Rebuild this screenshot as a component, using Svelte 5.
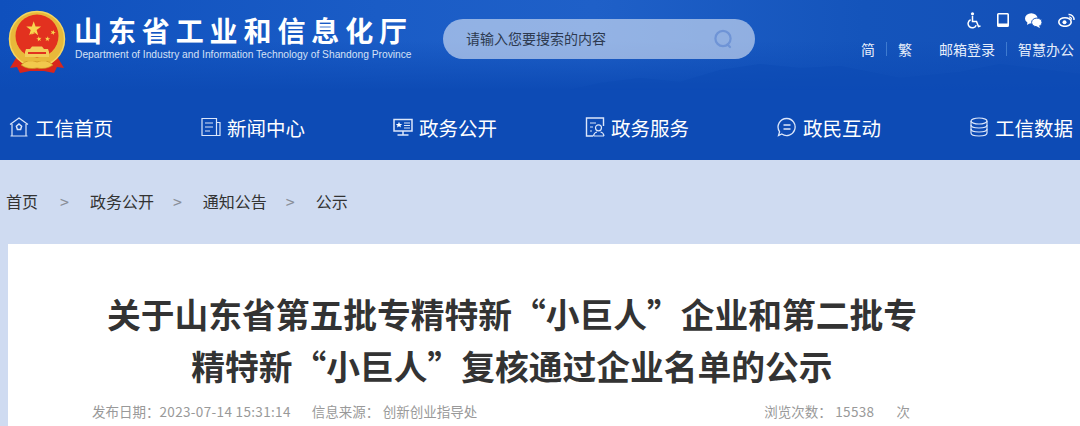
<script>
  // Nav items, the icon is picked by key in the markup below
  const navItems = [
    { key: 'home', label: '工信首页' },
    { key: 'news', label: '新闻中心' },
    { key: 'open', label: '政务公开' },
    { key: 'service', label: '政务服务' },
    { key: 'chat', label: '政民互动' },
    { key: 'data', label: '工信数据' }
  ];

  const crumbs = ['首页', '政务公开', '通知公告', '公示'];

  const starPoints = '0,-5 1.2,-1.6 4.8,-1.6 1.9,0.6 2.9,4 0,2 -2.9,4 -1.9,0.6 -4.8,-1.6 -1.2,-1.6';
  const smallStars = [
    { x: 25, y: 25, r: -20 },
    { x: 45.5, y: 25, r: 20 },
    { x: 31.5, y: 31.5, r: -10 },
    { x: 40, y: 31.5, r: 10 }
  ];
</script>

<div class="page">

  <!-- Header -->
  <header class="top">
    <svg class="hills" width="1080" height="40" viewBox="0 0 1080 40">
      <path d="M570 40 L600 33 L640 28 L680 32 L720 20 L760 14 L800 18 L840 16 L900 28 L960 22 L1000 14 L1080 24 V40 Z" fill="#0d4bb5" opacity=".55" />
    </svg>

    <div class="brand">
      <svg class="emblem" width="58" height="68" viewBox="0 0 58 68">
        <path d="M8 50 L2 60 L9 59 L12 65 L22 63 L36 63 L46 65 L49 59 L56 60 L50 50 Z" fill="#d8261c" />
        <circle cx="29" cy="31" r="27.5" fill="#e8b93a" />
        <circle cx="29" cy="31" r="27.5" fill="none" stroke="#f4d660" stroke-width="1.5" />
        <circle cx="29" cy="28" r="21.5" fill="#e2311f" />
        <polygon points={starPoints} fill="#f8d64e" transform="translate(35 21) scale(1.55) translate(-6 0)" />
        {#each smallStars as star}
          <polygon points={starPoints} fill="#f8d64e" transform="translate({star.x - 0.5} {star.y - 0.5}) rotate({star.r}) scale(0.55)" />
        {/each}
        <path d="M18 41 L22 41 L24 38.5 L34 38.5 L36 41 L40 41 L41 44 L41 49 L17 49 L17 44 Z" fill="#f3cd5a" />
        <path d="M20 44 H38 V46 H20 Z" fill="#e2311f" />
        <path d="M13 57 Q20 50 29 54 Q38 50 45 57 Q38 62 29 60 Q20 62 13 57 Z" fill="#f2c94c" stroke="#c98a1e" stroke-width="0.7" />
        <path d="M16 52 Q22 47 29 50 Q36 47 42 52 Q36 54 29 53 Q22 54 16 52 Z" fill="#e8b93a" />
      </svg>
      <div class="brandText">
        <div class="brandName">山东省工业和信息化厅</div>
        <div class="brandEn">Department of Industry and Information Technology of Shandong Province</div>
      </div>
    </div>

    <div class="search">
      <span>请输入您要搜索的内容</span>
      <svg width="20" height="20" viewBox="0 0 20 20" fill="none" stroke="#6f94d6" stroke-width="2.2">
        <circle cx="10" cy="9.5" r="7.6" />
        <path d="M14.5 15.5 L17 18" stroke-linecap="round" />
      </svg>
    </div>

    <div class="tools">
      <div class="toolIcons">
        <svg width="14" height="17" viewBox="0 0 14 17" fill="none" stroke="#fff" stroke-width="1.5">
          <circle cx="5.5" cy="1.8" r="1.6" fill="#fff" stroke="none" />
          <path d="M5.5 4 V9.5 H9.5 L11.5 14.5 L13.5 14" />
          <path d="M3.6 7.8 A4.2 4.2 0 1 0 9.2 13.2" />
        </svg>
        <svg width="12" height="14" viewBox="0 0 12 14">
          <path fill-rule="evenodd" d="M1.5 0 H10.5 A1.5 1.5 0 0 1 12 1.5 V12.5 A1.5 1.5 0 0 1 10.5 14 H1.5 A1.5 1.5 0 0 1 0 12.5 V1.5 A1.5 1.5 0 0 1 1.5 0 Z M1.6 1.6 V10.6 H10.4 V1.6 Z" fill="#fff" />
        </svg>
        <svg width="17" height="15" viewBox="0 0 17 15" fill="#fff">
          <ellipse cx="6.3" cy="5.4" rx="6.3" ry="5.2" />
          <path d="M2.6 8.5 L2 12 L6 9.6 Z" />
          <ellipse cx="11.8" cy="9.4" rx="5.2" ry="4.3" stroke="#1a57bd" stroke-width="1" />
          <path d="M14 12.6 L15 15 L11.6 13.4 Z" />
        </svg>
        <svg width="17" height="14" viewBox="0 0 17 14" fill="none" stroke="#fff">
          <ellipse cx="7" cy="9" rx="6.2" ry="4.3" stroke-width="1.6" />
          <circle cx="6.5" cy="9.2" r="2" fill="#fff" stroke="none" />
          <path d="M10.5 1.5 A5 5 0 0 1 16 7" stroke-width="1.4" />
          <path d="M11 4 A2.4 2.4 0 0 1 13.5 6.6" stroke-width="1.2" />
        </svg>
      </div>
      <div class="toolLinks">
        <span>简</span><i></i><span class="gapRight">繁</span>
        <span>邮箱登录</span><i></i><span>智慧办公</span>
      </div>
    </div>
  </header>

  <!-- Nav -->
  <nav class="mainNav">
    {#each navItems as item}
      <div class="navItem">
        <svg width="20" height="20" viewBox="0 0 20 20" fill="none" stroke="#dbe6fa" stroke-width="1.2">
          {#if item.key === 'home'}
            <path d="M1 7.5 L10 1 L19 7.5 M3 7 V19 H17 V7 M1.5 19 H18.5" />
            <polygon points="10,7 12.6,9.2 11.6,12.6 8.4,12.6 7.4,9.2" stroke-width="1.5" />
          {:else if item.key === 'news'}
            <path d="M1 1.5 H15.5 V18.5 H1 Z M15.5 5.5 H19 V18.5 H15.5" />
            <path d="M4 6 H12 M4 10 H12 M4 14 H9" />
          {:else if item.key === 'open'}
            <path d="M1 2.5 H19 V14 H1 Z M10 14 V17.5 M4.5 18 H15.5" stroke-width="1.5" />
            <polygon points="6,4.8 6.9,7 9.2,7 7.4,8.4 8,10.6 6,9.3 4,10.6 4.6,8.4 2.8,7 5.1,7" fill="#fff" stroke="none" />
            <path d="M11 6 H17 M11 8.5 H17 M11 11 H17" />
          {:else if item.key === 'service'}
            <path d="M8 19 H1.5 V1 H18.5 V9" stroke-width="1.4" />
            <path d="M5 6 H11 M5 10 H8 M5 14 H7" />
            <circle cx="13.5" cy="10.8" r="3" />
            <path d="M8.5 19 Q9 15.5 12 15 M19 19 Q18.5 15.5 15.5 15 M8.5 19 H19" />
          {:else if item.key === 'chat'}
            <path d="M10 1.5 A8.5 8.5 0 1 1 4.8 17 L1.5 18.5 L2.6 14.8 A8.5 8.5 0 0 1 10 1.5 Z" stroke-width="1.3" />
            <path d="M6.5 8 H13.5 M6.5 12 H13.5" stroke-width="1.4" />
          {:else}
            <ellipse cx="10" cy="4" rx="8" ry="3" />
            <path d="M2 4 V16 C2 18 6 19 10 19 C14 19 18 18 18 16 V4" />
            <path d="M2 8 C2 10 6 11 10 11 C14 11 18 10 18 8 M2 12 C2 14 6 15 10 15 C14 15 18 14 18 12" />
          {/if}
        </svg>
        <span>{item.label}</span>
      </div>
    {/each}
  </nav>

  <!-- Breadcrumb -->
  <div class="crumbs">
    {#each crumbs as crumb, i}
      {#if i > 0}<em>&gt;</em>{/if}
      <span>{crumb}</span>
    {/each}
  </div>

  <!-- Article -->
  <main class="card">
    <h1>关于山东省第五批专精特新“小巨人”企业和第二批专<br />精特新“小巨人”复核通过企业名单的公示</h1>
    <div class="meta">
      <span>发布日期：<b class="num">2023-07-14 15:31:14</b></span>
      <span class="source">信息来源：<b>创新创业指导处</b></span>
      <span class="views">浏览次数：<b class="num">15538</b><b class="unit">次</b></span>
    </div>
  </main>
</div>

<style>
  :global(body) {
    margin: 0;
    background: #cfdbf1;
  }

  .page {
    width: 1080px;
    height: 426px;
    overflow: hidden;
    font-family: "Noto Sans CJK SC", "Liberation Sans", sans-serif;
  }

  .top {
    position: relative;
    display: flex;
    align-items: flex-start;
    height: 90px;
    background: linear-gradient(180deg, rgba(13, 75, 181, 0) 45%, #0d4bb5 100%),
      linear-gradient(90deg, #0f50bd 0%, #1a5cc6 35%, #1f60c8 55%, #1454bb 80%, #1450b8 100%);
  }

  /* faint mountain line behind the header */
  .hills {
    position: absolute;
    left: 0;
    bottom: 0;
  }

  .brand,
  .search,
  .tools {
    position: relative;
  }

  .brand {
    display: flex;
    width: 443px;
    padding: 8px 0 0 8px;
    box-sizing: border-box;
  }

  .emblem {
    flex-shrink: 0;
  }

  .brandText {
    margin: 6px 0 0 9px;
    color: #fff;
  }

  .brandName {
    font-size: 28px;
    font-weight: 700;
    line-height: 32px;
    letter-spacing: 5.9px;
    margin-left: -1px;
    white-space: nowrap;
  }

  .brandEn {
    margin-top: 2px;
    font-family: "Liberation Sans", sans-serif;
    font-size: 10.25px;
    line-height: 13px;
    color: #d5e1f6;
    white-space: nowrap;
  }

  .search {
    display: flex;
    align-items: center;
    justify-content: space-between;
    width: 312px;
    height: 40px;
    margin-top: 19px;
    padding: 0 22px 0 23px;
    box-sizing: border-box;
    border-radius: 20px;
    background: rgba(255, 255, 255, .52);
    font-size: 14px;
    color: #2d3a50;
  }

  .search span {
    margin-bottom: 2px;
  }

  .tools {
    flex: 1;
    color: #e6eefb;
  }

  .toolIcons {
    display: flex;
    align-items: center;
    justify-content: flex-end;
    gap: 16px;
    height: 16px;
    margin: 12px 5px 0 0;
  }

  .toolLinks {
    display: flex;
    align-items: center;
    justify-content: flex-end;
    margin: 11px 6px 0 0;
    font-size: 14px;
    line-height: 20px;
    white-space: nowrap;
  }

  .toolLinks i {
    width: 1px;
    height: 14px;
    margin: 0 11px;
    background: #3f7bd0;
  }

  .toolLinks .gapRight {
    margin-right: 27px;
  }

  .mainNav {
    display: grid;
    grid-template-columns: repeat(6, 192px);
    align-items: center;
    height: 70px;
    padding: 4px 0 0 9px;
    box-sizing: border-box;
    background: #0d4bb5;
  }

  .navItem {
    display: flex;
    align-items: center;
    gap: 6px;
    color: #fff;
    font-size: 19.5px;
    white-space: nowrap;
  }

  .crumbs {
    display: flex;
    align-items: center;
    height: 82px;
    padding-left: 6px;
    font-size: 16px;
    color: #333;
  }

  .crumbs span:first-child {
    margin-right: 3px;
  }

  .crumbs em {
    margin: 0 21px 0 19px;
    font-style: normal;
    font-size: 16px;
    color: #8a8f99;
  }

  .card {
    margin: 2px 0 0 8px;
    height: 182px;
    background: #fff;
    overflow: hidden;
  }

  h1 {
    margin: 44px 0 0;
    padding-right: 64px;
    text-align: center;
    font-size: 33.75px;
    font-weight: 700;
    line-height: 52px;
    color: #333;
    white-space: nowrap;
  }

  .meta {
    display: flex;
    margin-top: 10px;
    padding-left: 84px;
    font-size: 13.5px;
    line-height: 18px;
    color: #999;
    white-space: nowrap;
  }

  .meta b {
    font-weight: 400;
  }

  .meta .num {
    letter-spacing: .34px;
  }

  .source {
    margin-left: 21px;
  }

  .source b {
    margin-left: 3.5px;
  }

  .views {
    margin-left: 287px;
  }

  .views b {
    margin-left: 3.5px;
  }

  .views .unit {
    margin-left: 22px;
  }
</style>
